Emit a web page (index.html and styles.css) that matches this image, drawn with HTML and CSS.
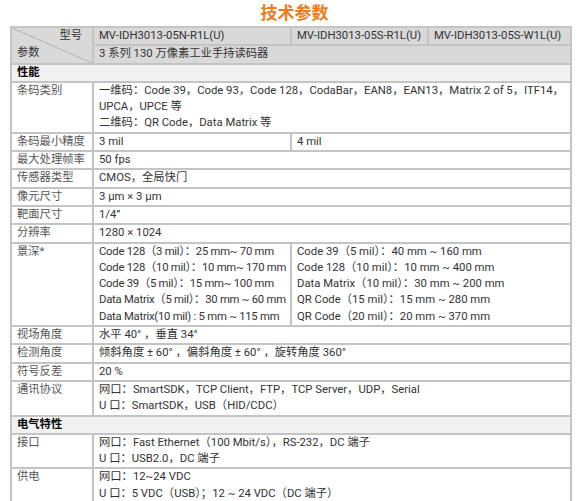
FILE: index.html
```html
<!DOCTYPE html>
<html lang="zh-CN">
<head>
<meta charset="utf-8">
<title>技术参数</title>
<link rel="stylesheet" href="styles.css">
</head>
<body>
<h1 class="title">技术参数</h1>
<table class="spec">
  <colgroup>
    <col class="c1"><col class="c2"><col class="c3"><col class="c4">
  </colgroup>
  <tr class="head">
    <td class="diag" rowspan="2">
      <div class="diag-top">型号</div>
      <div class="diag-bot">参数</div>
    </td>
    <td>MV-IDH3013-05N-R1L(U)</td>
    <td>MV-IDH3013-05S-R1L(U)</td>
    <td>MV-IDH3013-05S-W1L(U)</td>
  </tr>
  <tr class="head">
    <td colspan="3">3 系列 130 万像素工业手持读码器</td>
  </tr>
  <tr class="section"><td colspan="4">性能</td></tr>
  <tr>
    <td class="lbl">条码类别</td>
    <td colspan="3">一维码：Code 39，Code 93，Code 128，CodaBar，EAN8，EAN13，Matrix 2 of 5，ITF14，<br>UPCA，UPCE 等<br>二维码：QR Code，Data Matrix 等</td>
  </tr>
  <tr>
    <td class="lbl">条码最小精度</td>
    <td>3 mil</td>
    <td colspan="2">4 mil</td>
  </tr>
  <tr><td class="lbl">最大处理帧率</td><td colspan="3">50 fps</td></tr>
  <tr><td class="lbl">传感器类型</td><td colspan="3">CMOS，全局快门</td></tr>
  <tr><td class="lbl">像元尺寸</td><td colspan="3">3 μm × 3 μm</td></tr>
  <tr><td class="lbl">靶面尺寸</td><td colspan="3">1/4”</td></tr>
  <tr><td class="lbl">分辨率</td><td colspan="3">1280 × 1024</td></tr>
  <tr>
    <td class="lbl">景深*</td>
    <td class="tight">Code 128（3 mil）：25 mm~ 70 mm<br>Code 128（10 mil）：10 mm~ 170 mm<br>Code 39（5 mil）：15 mm~ 100 mm<br>Data Matrix（5 mil）：30 mm ~ 60 mm<br>Data Matrix(10 mil) : 5 mm ~ 115 mm</td>
    <td colspan="2">Code 39（5 mil）：40 mm ~ 160 mm<br>Code 128（10 mil）：10 mm ~ 400 mm<br>Data Matrix（10 mil）：30 mm ~ 200 mm<br>QR Code（15 mil）：15 mm ~ 280 mm<br>QR Code（20 mil）：20 mm ~ 370 mm</td>
  </tr>
  <tr><td class="lbl">视场角度</td><td colspan="3">水平 40° ，垂直 34°</td></tr>
  <tr><td class="lbl">检测角度</td><td colspan="3">倾斜角度 ± 60° ，偏斜角度 ± 60° ，旋转角度 360°</td></tr>
  <tr><td class="lbl">符号反差</td><td colspan="3">20 %</td></tr>
  <tr><td class="lbl">通讯协议</td><td colspan="3">网口：SmartSDK，TCP Client，FTP，TCP Server，UDP，Serial<br>U 口：SmartSDK，USB（HID/CDC）</td></tr>
  <tr class="section"><td colspan="4">电气特性</td></tr>
  <tr><td class="lbl">接口</td><td colspan="3">网口：Fast Ethernet（100 Mbit/s），RS-232，DC 端子<br>U 口：USB2.0，DC 端子</td></tr>
  <tr><td class="lbl">供电</td><td colspan="3">网口：12~24 VDC<br>U 口：5 VDC（USB）；12 ~ 24 VDC（DC 端子）</td></tr>
  <tr class="tail"><td class="lbl"></td><td colspan="3"></td></tr>
</table>
</body>
</html>
```

FILE: styles.css
```css
html, body {
  margin: 0;
  padding: 0;
  background: #ffffff;
}
body {
  font-family: Roboto, "Noto Sans CJK SC", sans-serif;
  color: #333333;
  font-size: 11.3px;
}
.title {
  margin: 0;
  padding-top: 3px;
  height: 26px;
  line-height: 20px;
  font-size: 17px;
  font-weight: 700;
  color: #f07a19;
  text-align: center;
  padding-left: 10px;
  box-sizing: border-box;
}
.spec {
  margin-left: 10px;
  border-collapse: collapse;
  table-layout: fixed;
  width: 560px;
}
.c1 { width: 82px; }
.c2 { width: 198px; }
.c3 { width: 137px; }
.c4 { width: 143px; }
.spec td {
  border: 2px solid #c4c4c4;
  padding: 0 5px;
  line-height: 16.3px;
  vertical-align: top;
  white-space: nowrap;
  overflow: hidden;
}
.spec .tail td {
  height: 16px;
}
.spec td.tight {
  letter-spacing: -0.25px;
}
.spec td.lbl {
  color: #555555;
}
.head td {
  background: #d9d9d9;
  color: #333333;
}
.section td {
  background: #f2f2f2;
  font-weight: 700;
  color: #000000;
}
.diag {
  padding: 0 !important;
  background: linear-gradient(to top right, transparent calc(50% - 0.7px), #a8a8a8 50%, transparent calc(50% + 0.7px)), #d9d9d9 !important;
  color: #555555;
}
.diag-top {
  text-align: right;
  padding-right: 10px;
  height: 17px;
}
.diag-bot {
  text-align: left;
  padding-left: 5px;
}
```
